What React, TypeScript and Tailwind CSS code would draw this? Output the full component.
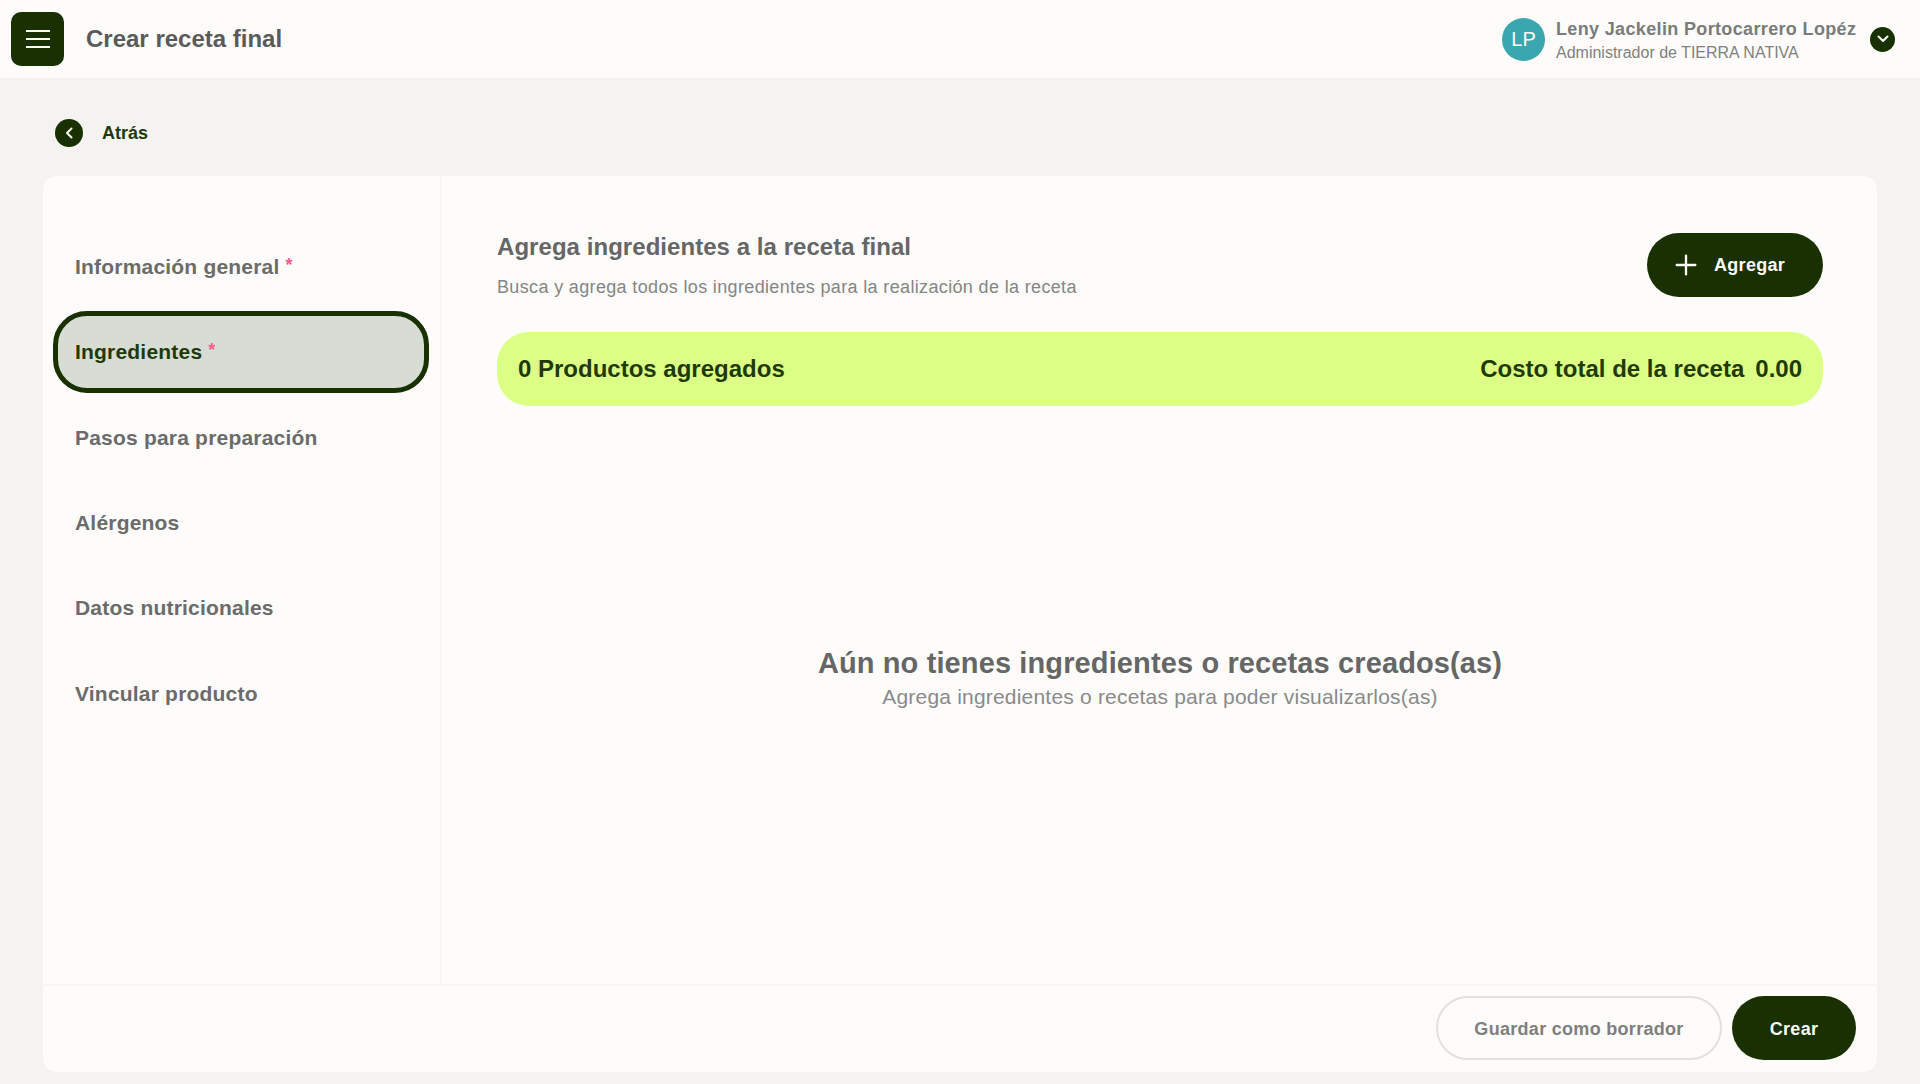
import { Plus } from "lucide-react";

const steps = [
  { label: "Información general", required: true },
  { label: "Ingredientes", required: true, active: true },
  { label: "Pasos para preparación" },
  { label: "Alérgenos" },
  { label: "Datos nutricionales" },
  { label: "Vincular producto" },
];

export default function App() {
  return (
    <div className="h-[1084px] overflow-hidden bg-[#f4f3f2] font-['Liberation_Sans',Arial,sans-serif]">
      <header className="flex h-[78px] items-center justify-between bg-[#fdfcfa] pl-[11px] pr-[25px]">
        <div className="flex items-center gap-[22px]">
          <button className="flex h-[54px] w-[53px] items-center justify-center rounded-[10px] bg-[#193000]">
            <svg width="24" height="20" viewBox="0 0 24 20" fill="none" stroke="#fdfcfa" strokeWidth="2.2">
              <path d="M0 2h24M0 10h24M0 18h24" />
            </svg>
          </button>
          <h1 className="text-2xl font-bold text-[#5a5a5a]">Crear receta final</h1>
        </div>
        <div className="flex items-center">
          <div className="flex h-[43px] w-[43px] items-center justify-center rounded-full bg-[#3aa6b0] text-xl text-[#fdfcfa]">
            LP
          </div>
          <div className="ml-[11px] w-[314px] pt-[3px]">
            <p className="text-lg leading-[24px] font-bold tracking-[0.35px] text-[#7b7b7b]">
              Leny Jackelin Portocarrero Lopéz
            </p>
            <p className="text-base leading-[24px] text-[#808080]">Administrador de TIERRA NATIVA</p>
          </div>
          <div className="flex h-[25px] w-[25px] items-center justify-center rounded-full bg-[#193000]">
            <svg width="12" height="8" viewBox="0 0 12 8" fill="none" stroke="#fdfcfa" strokeWidth="2" strokeLinecap="round" strokeLinejoin="round">
              <path d="M1.5 1.5 6 6l4.5-4.5" />
            </svg>
          </div>
        </div>
      </header>

      <div className="flex h-[98px] items-center pt-[11px] pl-[55px]">
        <div className="flex h-[28px] w-[28px] items-center justify-center rounded-full bg-[#193000]">
          <svg width="8" height="12" viewBox="0 0 8 12" fill="none" stroke="#fdfcfa" strokeWidth="2" strokeLinecap="round" strokeLinejoin="round">
            <path d="M6.5 1.5 2 6l4.5 4.5" />
          </svg>
        </div>
        <span className="ml-[19px] text-lg font-bold text-[#1f3a08]">Atrás</span>
      </div>

      <main className="mx-[43px] flex h-[896px] flex-col rounded-[14px] bg-[#fdfcfa]">
        <div className="flex min-h-0 flex-1">
          <aside className="w-[399px] border-r-2 border-[#f7f6f4] pt-[50px] pl-[10px]">
            {steps.map((step) => (
              <div
                key={step.label}
                className={
                  step.active
                    ? "mb-[3.4px] flex h-[82px] w-[376px] items-center rounded-[34px] border-[5px] border-[#193000] bg-[#d7dcd5] pb-[1px] pl-[17px] text-[#1f3a08]"
                    : "mb-[3.4px] flex h-[82px] w-[376px] items-center pb-[1px] pl-[22px] text-[#6b6b6b]"
                }
              >
                <span className="text-[21px] font-bold tracking-[0.2px]">{step.label}</span>
                {step.required && <span className="mb-[4px] ml-[6px] text-lg font-bold text-[#ff5c8d]">*</span>}
              </div>
            ))}
          </aside>

          <section className="flex flex-1 flex-col pt-[57px] pr-[54px] pl-[55px]">
            <div className="flex items-start justify-between">
              <div>
                <h2 className="text-2xl leading-[28px] font-bold tracking-[0.05px] text-[#666666]">
                  Agrega ingredientes a la receta final
                </h2>
                <p className="mt-[14px] text-lg leading-[24px] tracking-[0.35px] text-[#858585]">
                  Busca y agrega todos los ingredientes para la realización de la receta
                </p>
              </div>
              <button className="flex h-[64px] w-[176px] items-center gap-[12px] rounded-full bg-[#193000] pl-[23px] text-lg font-bold tracking-[0.3px] text-[#fdfcfa]">
                <Plus size={32} strokeWidth={1.75} />
                Agregar
              </button>
            </div>
            <div className="mt-[33px] flex h-[74px] items-center justify-between rounded-[32px] bg-[#dcff85] px-[21px] text-2xl font-bold text-[#1f3a08]">
              <span>0 Productos agregados</span>
              <span className="flex gap-[11px]">
                <span>Costo total de la receta</span>
                <span>0.00</span>
              </span>
            </div>
            <div className="mt-[239px] text-center">
              <p className="text-[29px] leading-[36px] font-bold tracking-[0.12px] text-[#666666]">
                Aún no tienes ingredientes o recetas creados(as)
              </p>
              <p className="text-[21px] leading-[32px] tracking-[0.2px] text-[#8a8a8a]">
                Agrega ingredientes o recetas para poder visualizarlos(as)
              </p>
            </div>
          </section>
        </div>

        <footer className="flex h-[88px] items-start justify-end gap-[10px] border-t-2 border-[#f7f6f4] pt-[10px] pr-[21px]">
          <button className="h-[64px] w-[286px] rounded-full border-2 border-[#e2e1df] pt-[1px] text-lg font-bold tracking-[0.3px] text-[#7f7f7f]">
            Guardar como borrador
          </button>
          <button className="h-[64px] w-[124px] rounded-full bg-[#193000] pt-[1px] text-lg font-bold tracking-[0.3px] text-[#fdfcfa]">
            Crear
          </button>
        </footer>
      </main>
    </div>
  );
}
